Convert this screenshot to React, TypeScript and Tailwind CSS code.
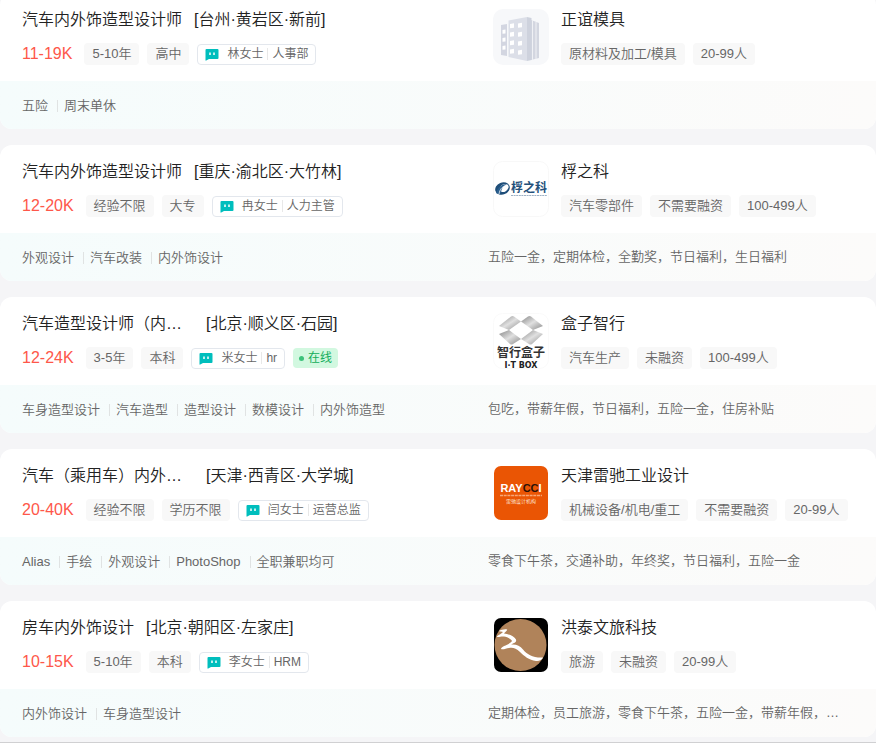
import React from 'react';

interface Job {
  title: string;
  clipped?: boolean;
  area: string;
  salary: string;
  tags: string[];
  recruiter: string;
  role: string;
  online?: boolean;
  skills: string[];
  company: string;
  companyTags: string[];
  welfare: string;
  logo: React.ReactNode;
}

function BuildingLogo() {
  const rows = [0, 1, 2, 3];
  return (
    <svg viewBox="0 0 56 56" className="size-full">
      <rect width="56" height="56" rx="10" fill="#f7f8fa" />
      <path d="M38 11l8 3v35l-8 2z" fill="#d3d6e0" />
      <path d="M39.500 11v40M43 13v37" stroke="#f0f1f5" strokeWidth="1" />
      <path d="M8 16l6-1v32l-6-1z" fill="#d3d6e1" />
      <path d="M15.500 11.500L34 8v44l-18.500-4z" fill="#dcdfe8" />
      <path d="M34 8l4.500 1v42L34 52z" fill="#ced2dd" />
      {rows.map((r) => (
        <g key={r} fill="#fff">
          <path d={`M17 ${15 + r * 8.500}l4-.7v4.500l-4 .5z`} />
          <path d={`M25 ${14.500 + r * 9}l4-.7v4.500l-4 .5z`} />
        </g>
      ))}
      {[0, 1, 2].map((r) => (
        <path key={r} d={`M9.500 ${21 + r * 8}l3-.5v4l-3 .3z`} fill="#fff" />
      ))}
    </svg>
  );
}

function FuzhikeLogo() {
  return (
    <svg viewBox="0 0 56 56" className="size-full">
      <rect x="0.500" y="0.500" width="55" height="55" rx="9" fill="#fff" stroke="#f8f8f8" />
      <ellipse cx="9.500" cy="27.500" rx="7.500" ry="6" fill="#1f4e79" transform="rotate(-22 9.5 27.5)" />
      <ellipse cx="11" cy="27" rx="5" ry="3.600" fill="#fff" transform="rotate(-35 11 27)" />
      <path d="M3 32c2-6 6-9 11-9-4 2-6 5-6 9-2 1-4 1-5 0z" fill="#2a5f8f" />
      <path d="M6 33c1-5 3-7 6-8" fill="none" stroke="#fff" strokeWidth="0.800" />
      <text x="18" y="31" fontSize="12" fontWeight="700" fill="#24507a" fontFamily="Noto Sans CJK SC, sans-serif">桴之科</text>
      <path d="M18 34.500h36" stroke="#9fb2c5" strokeWidth="1" strokeDasharray="2 0.600" />
    </svg>
  );
}

function BoxLogo() {
  return (
    <svg viewBox="0 0 56 56" className="size-full">
      <defs>
        <linearGradient id="boxSilver" x1="0" y1="0" x2="1" y2="1">
          <stop offset="0" stopColor="#858585" />
          <stop offset="0.500" stopColor="#e0e0e0" />
          <stop offset="1" stopColor="#8a8a8a" />
        </linearGradient>
      </defs>
      <rect x="0.500" y="0.500" width="55" height="55" rx="9" fill="#fff" stroke="#fafafa" />
      <g fill="url(#boxSilver)">
        <path d="M6 13l12-9.500c1-.7 2-.7 3 0L28 8.500l-12 8.500z" />
        <path d="M50 13L38 3.500c-1-.7-2-.7-3 0L28 8.500l12 8.500z" />
        <path d="M6 21l10-4 12 9-8 5c-1 .7-2 .7-3 0z" />
        <path d="M50 21l-10-4-12 9 8 5c1 .7 2 .7 3 0z" />
      </g>
      <text x="28" y="44" textAnchor="middle" fontSize="12" fontWeight="700" fill="#333" fontFamily="Noto Sans CJK SC, sans-serif">智行盒子</text>
      <text x="28" y="55" textAnchor="middle" fontSize="8" fontWeight="700" fill="#222" fontFamily="DejaVu Sans, sans-serif">I·T BOX</text>
    </svg>
  );
}

function RaycciLogo() {
  return (
    <svg viewBox="0 0 56 56" className="size-full">
      <rect x="1" y="1" width="54" height="54" rx="7" fill="#ea5504" />
      <text x="28" y="27" textAnchor="middle" fontSize="11" fontWeight="700" fill="#fff" fontFamily="Liberation Sans, sans-serif">
        RAY<tspan fill="#2b1208">CC</tspan>I
      </text>
      <path d="M7 30.500h42" stroke="#f7a777" strokeWidth="1.500" strokeDasharray="3 0.700" />
      <text x="28" y="38" textAnchor="middle" fontSize="5" fontWeight="400" fill="#fde3d2" fontFamily="Noto Sans CJK SC, sans-serif">雷驰设计机构</text>
    </svg>
  );
}

function HongtaiLogo() {
  return (
    <svg viewBox="0 0 56 56" className="size-full">
      <rect x="1" y="1" width="54" height="54" rx="7" fill="#000" />
      <circle cx="27.500" cy="28" r="26" fill="#b0835a" />
      <path
        d="M6 14c2-1 5-2 8-1.500 1 .5-2 2.500-3 4 4 .5 10 2.500 12 6 1 3-3 3.500-5 5 5-.5 9 1 12 5 4 5 10 8.500 20 8-1 2.500-4 4-7 3.500-7-1-12-5-16-9-4-4-7-4.500-11-4-3 .5-6 2-8 1 0-3 8-4 11-8-1-2.500-5-4-8-4.500-3-.3-5 1-7 .5 0-2 4-2.500 6-5-1-.5-3 0-4-1z"
        fill="#fff"
      />
    </svg>
  );
}

const jobs: Job[] = [
  {
    title: '汽车内外饰造型设计师',
    area: '[台州·黄岩区·新前]',
    salary: '11-19K',
    tags: ['5-10年', '高中'],
    recruiter: '林女士',
    role: '人事部',
    skills: ['五险', '周末单休'],
    company: '正谊模具',
    companyTags: ['原材料及加工/模具', '20-99人'],
    welfare: '',
    logo: <BuildingLogo />,
  },
  {
    title: '汽车内外饰造型设计师',
    area: '[重庆·渝北区·大竹林]',
    salary: '12-20K',
    tags: ['经验不限', '大专'],
    recruiter: '冉女士',
    role: '人力主管',
    skills: ['外观设计', '汽车改装', '内外饰设计'],
    company: '桴之科',
    companyTags: ['汽车零部件', '不需要融资', '100-499人'],
    welfare: '五险一金，定期体检，全勤奖，节日福利，生日福利',
    logo: <FuzhikeLogo />,
  },
  {
    title: '汽车造型设计师（内…',
    clipped: true,
    area: '[北京·顺义区·石园]',
    salary: '12-24K',
    tags: ['3-5年', '本科'],
    recruiter: '米女士',
    role: 'hr',
    online: true,
    skills: ['车身造型设计', '汽车造型', '造型设计', '数模设计', '内外饰造型'],
    company: '盒子智行',
    companyTags: ['汽车生产', '未融资', '100-499人'],
    welfare: '包吃，带薪年假，节日福利，五险一金，住房补贴',
    logo: <BoxLogo />,
  },
  {
    title: '汽车（乘用车）内外…',
    clipped: true,
    area: '[天津·西青区·大学城]',
    salary: '20-40K',
    tags: ['经验不限', '学历不限'],
    recruiter: '闫女士',
    role: '运营总监',
    skills: ['Alias', '手绘', '外观设计', 'PhotoShop', '全职兼职均可'],
    company: '天津雷驰工业设计',
    companyTags: ['机械设备/机电/重工', '不需要融资', '20-99人'],
    welfare: '零食下午茶，交通补助，年终奖，节日福利，五险一金',
    logo: <RaycciLogo />,
  },
  {
    title: '房车内外饰设计',
    area: '[北京·朝阳区·左家庄]',
    salary: '10-15K',
    tags: ['5-10年', '本科'],
    recruiter: '李女士',
    role: 'HRM',
    skills: ['内外饰设计', '车身造型设计'],
    company: '洪泰文旅科技',
    companyTags: ['旅游', '未融资', '20-99人'],
    welfare: '定期体检，员工旅游，零食下午茶，五险一金，带薪年假，…',
    logo: <HongtaiLogo />,
  },
];

function Tag({ children }: { children: React.ReactNode }) {
  return <li className="h-[22px] rounded bg-[#f8f8f8] px-2 text-[13px] leading-[21px] text-[#666]">{children}</li>;
}

function ChatIcon() {
  return (
    <svg viewBox="0 0 14 13" className="h-[13px] w-[14px]">
      <path d="M1.500 1h11a1 1 0 0 1 1 1v8a1 1 0 0 1-1 1H4L1.200 12.500a.4.4 0 0 1-.7-.3V2a1 1 0 0 1 1-1z" fill="#00bebd" />
      <path d="M5 4.500v2.500M9 4.500v2.500" stroke="#fff" strokeWidth="1.500" />
    </svg>
  );
}

function JobCard({ job }: { job: Job }) {
  return (
    <li className="overflow-hidden rounded-xl bg-white">
      <div className="grid grid-cols-[39fr_31fr] py-4">
        {/* Position */}
        <div className="pl-[22px]">
          <a href="#job" className="flex gap-3 text-base leading-[22px] text-[#222]">
            <span className={job.clipped ? 'w-[172px]' : ''}>{job.title}</span>
            <span>{job.area}</span>
          </a>
          <div className="mt-3 flex items-center gap-2">
            <span className="mr-1 text-base leading-[22px] text-[#fe574a]">{job.salary}</span>
            <ul className="flex gap-2">
              {job.tags.map((tag) => (
                <Tag key={tag}>{tag}</Tag>
              ))}
            </ul>
            <a
              href="#chat"
              className="flex h-[21px] items-center rounded border border-[#e3e7ed] px-[7px] text-xs text-[#666]"
            >
              <ChatIcon />
              <span className="ml-2 leading-[18px]">{job.recruiter}</span>
              <span className="mx-1 h-3 w-px bg-[#e8e8e8]" />
              <span className="leading-[18px]">{job.role}</span>
            </a>
            {job.online && (
              <span className="flex h-5 items-center gap-1 rounded bg-[#d2f8e0] px-1.5 text-xs font-normal text-[#12ad5b]">
                <i className="size-[5px] rounded-full bg-[#3dc27b]" />
                在线
              </span>
            )}
          </div>
        </div>

        {/* Company */}
        <div className="flex gap-3 pl-[5px]">
          <div className="size-14 shrink-0">{job.logo}</div>
          <div>
            <a href="#company" className="block text-base leading-[22px] text-[#222]">{job.company}</a>
            <ul className="mt-3 flex gap-2">
              {job.companyTags.map((tag) => (
                <Tag key={tag}>{tag}</Tag>
              ))}
            </ul>
          </div>
        </div>
      </div>

      {/* Skills and benefits */}
      <div className="grid h-12 grid-cols-[39fr_31fr] items-center bg-linear-to-r from-[#f5fcfc] to-[#fcfbfa] text-[13px] text-[#666]">
        <ul className="flex pt-0.5 pl-[22px]">
          {job.skills.map((skill, i) => (
            <li key={skill} className="flex items-center">
              {i > 0 && <span className="mr-1.5 ml-[9px] h-3 w-px bg-[#e0e3e3]" />}
              {skill}
            </li>
          ))}
        </ul>
        <p className="truncate">{job.welfare}</p>
      </div>
    </li>
  );
}

export default function App() {
  return (
    <main className="overflow-hidden border-b border-[#d0d0d2] bg-[#f5f5f7] pb-[5px] font-['Liberation_Sans','Noto_Sans_CJK_SC',sans-serif] font-[350] whitespace-nowrap">
      <ul className="-mt-[7px] flex flex-col gap-4">
        {jobs.map((job) => (
          <JobCard key={job.company} job={job} />
        ))}
      </ul>
    </main>
  );
}
